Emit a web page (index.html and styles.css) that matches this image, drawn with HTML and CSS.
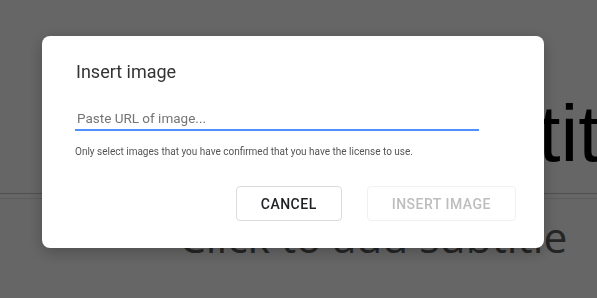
FILE: index.html
```html
<!DOCTYPE html>
<html lang="en">

<head>
  <meta charset="UTF-8">
  <meta name="viewport" content="width=device-width, initial-scale=1.0">
  <title>Insert image</title>
  <link rel="stylesheet" href="styles.css">
</head>

<body>
  <div class="slide">
    <div class="slide-title">Click to add title</div>
    <div class="slide-sub">Click to add subtitle</div>
  </div>

  <div class="mask"></div>

  <div class="dialog">
    <div class="dialog-t">Insert image</div>
    <input class="url" type="text" placeholder="Paste URL of image...">
    <div class="hint">Only select images that you have confirmed that you have the license to use.</div>
    <div class="dialog-f">
      <button class="btn">CANCEL</button>
      <button class="btn btn-off" disabled>INSERT IMAGE</button>
    </div>
  </div>
</body>

</html>
```

FILE: styles.css
```css
* {
  box-sizing: border-box;
}

html,
body {
  margin: 0;
  height: 100%;
  overflow: hidden;
}

body {
  background: #fff;
}

.slide {
  width: 800px;
  padding-top: 94px;
  font-family: "Liberation Sans", Arial, sans-serif;
}

.slide-title {
  padding: 0 0 19px 98px;
  font-size: 80px;
  line-height: 80px;
  color: #000;
  white-space: nowrap;
  border-bottom: 1px solid #c6c6c6;
}

.slide-sub {
  margin-top: 4px;
  padding: 17px 0 0 179px;
  font-family: "Open Sans", sans-serif;
  font-size: 42.5px;
  line-height: 42px;
  color: #5d5d5d;
  white-space: nowrap;
  border-top: 1px solid #e6e6e6;
}

.mask {
  position: fixed;
  top: 0;
  left: 0;
  right: 0;
  bottom: 0;
  background: rgba(0, 0, 0, .6);
}

.dialog {
  position: fixed;
  top: 36px;
  left: 42px;
  width: 502px;
  height: 212px;
  padding: 24px 28px 27px 33px;
  display: flex;
  flex-direction: column;
  background: #fff;
  border-radius: 8px;
  box-shadow: 0 4px 16px rgba(0, 0, 0, .25);
  font-family: Roboto, "Liberation Sans", Arial, sans-serif;
}

.dialog-t {
  padding-left: 1px;
  font-size: 18px;
  line-height: 24px;
  color: #333;
}

.url {
  width: 404px;
  height: 24px;
  margin-top: 23px;
  padding: 0 0 0 2px;
  border: 0;
  border-bottom: 2px solid #4d90fe;
  outline: none;
  font-family: inherit;
  font-size: 13.5px;
  color: #333;
}

.url::placeholder {
  color: #757575;
}

.hint {
  margin-top: 14px;
  font-size: 10px;
  line-height: 14px;
  color: #555;
}

.dialog-f {
  margin-top: 27px;
  display: flex;
  justify-content: flex-end;
  gap: 25px;
}

.btn {
  height: 35px;
  padding: 0 24px;
  background: #fff;
  border: 1px solid #dadce0;
  border-radius: 4px;
  font-family: inherit;
  font-size: 14px;
  font-weight: 500;
  letter-spacing: .5px;
  color: #202124;
  cursor: pointer;
}

.btn-off {
  border-color: #f1f1f1;
  color: #bdbdbd;
  cursor: default;
}
```
